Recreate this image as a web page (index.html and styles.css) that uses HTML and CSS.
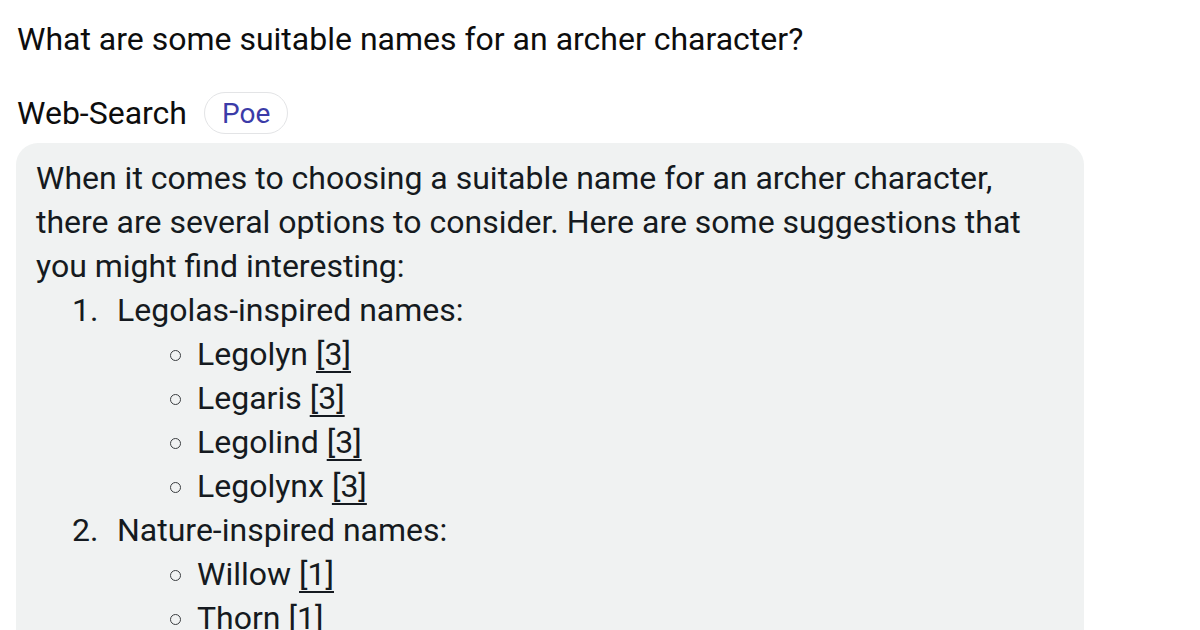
FILE: index.html
```html
<!DOCTYPE html>
<html>
<head>
<meta charset="utf-8">
<link rel="stylesheet" href="styles.css">
</head>
<body>
<div class="page">
  <div class="question">What are some suitable names for an archer character?</div>
  <div class="bot-row">
    <span class="bot-name">Web-Search</span>
    <span class="pill">Poe</span>
  </div>
  <div class="bubble">
    <p class="intro">When it comes to choosing a suitable name for an archer character, there are several options to consider. Here are some suggestions that you might find interesting:</p>
    <ol class="main-list">
      <li>Legolas-inspired names:
        <ul class="sub-list">
          <li>Legolyn <a class="cite">[3]</a></li>
          <li>Legaris <a class="cite">[3]</a></li>
          <li>Legolind <a class="cite">[3]</a></li>
          <li>Legolynx <a class="cite">[3]</a></li>
        </ul>
      </li>
      <li>Nature-inspired names:
        <ul class="sub-list">
          <li>Willow <a class="cite">[1]</a></li>
          <li>Thorn <a class="cite">[1]</a></li>
        </ul>
      </li>
    </ol>
  </div>
</div>
</body>
</html>
```
FILE: styles.css
```css
html, body {
  margin: 0;
  padding: 0;
  background: #ffffff;
  overflow: hidden;
}
body {
  font-family: Roboto, "Liberation Sans", sans-serif;
  font-size: 32px;
  color: #111418;
}
.page {
  padding: 17px 16px 0 16px;
  width: 1068px;
}
.question {
  line-height: 44px;
  color: #0d0d0d;
  padding-left: 1px;
}
.bot-row {
  display: flex;
  align-items: center;
  gap: 17px;
  margin-top: 30px;
  height: 44px;
  padding-left: 1px;
}
.bot-name {
  color: #0d0d0d;
}
.pill {
  display: inline-flex;
  align-items: center;
  height: 40px;
  padding: 0 17px;
  border: 1.5px solid #e3e4e6;
  border-radius: 22px;
  color: #3b3ba8;
  font-size: 28px;
}
.bubble {
  margin-top: 8px;
  background: #f0f2f2;
  border-radius: 22px;
  padding: 13px 20px 20px 20px;
  line-height: 44px;
  color: #151a20;
}
.intro {
  margin: 0;
  padding-right: 30px;
}
.main-list {
  margin: 0;
  padding-left: 81px;
  list-style: none;
  counter-reset: item;
}
.main-list > li {
  counter-increment: item;
}
.main-list > li::before {
  content: counter(item) ".";
  display: inline-block;
  width: 45px;
  margin-left: -45px;
}
.sub-list {
  margin: 0;
  padding-left: 80px;
  list-style: none;
}
.sub-list > li {
  display: flex;
  align-items: center;
  gap: 0;
}
.sub-list > li::before {
  content: "";
  box-sizing: border-box;
  width: 11px;
  height: 11px;
  border: 1.5px solid #3a3d40;
  border-radius: 50%;
  margin-left: -27px;
  margin-right: 16px;
  margin-top: 2px;
  flex: none;
}
.cite {
  color: #151a20;
  text-decoration: underline;
  text-underline-offset: 6px;
  text-decoration-thickness: 1.5px;
  margin-left: 8px;
}
```
